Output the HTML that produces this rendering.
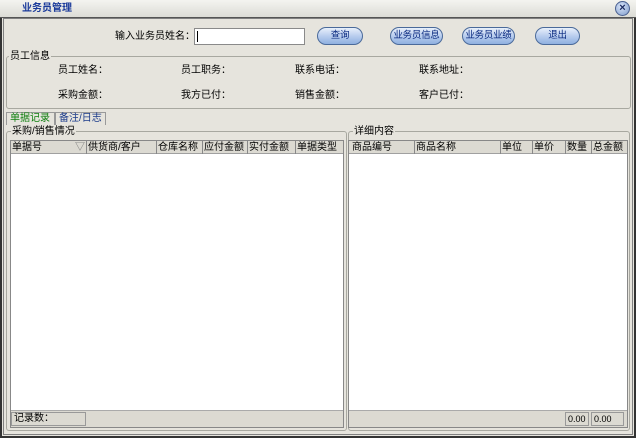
<!DOCTYPE html>
<html><head><meta charset="utf-8"><style>
*{margin:0;padding:0;box-sizing:border-box}
body{width:636px;height:438px;background:#fff;font-family:"Liberation Sans","Noto Sans CJK SC",sans-serif;font-size:10px;color:#000;position:relative;overflow:hidden}
.a{position:absolute}
.t{position:absolute;white-space:nowrap;font-size:10px;line-height:12px}
.btn{position:absolute;height:18px;border:1px solid #4a6a9a;border-radius:9px;background:linear-gradient(#e8f0fb,#b9cdee 50%,#8fb0e0);text-align:center;font-size:9.5px;line-height:16px;color:#0a2a80;white-space:nowrap;letter-spacing:-0.3px}
.hdr{position:absolute;height:13px;background:#dcdad2;border-bottom:1px solid #a0a0a0}
.hdr span{position:absolute;top:0;line-height:13px;font-size:10px;white-space:nowrap;border-left:1px solid #888;padding-left:1px}
.grp{position:absolute;border:1px solid #a8a8a0;border-radius:3px}
.lg{position:absolute;background:#e6e4dd;font-size:10px;line-height:12px;padding:0 1px;white-space:nowrap}
</style></head><body>
<div class="a" style="left:0;top:0;width:636px;height:18px;background:linear-gradient(#f4f4f0,#dcdcd6);border-bottom:1px solid #555"></div>
<div class="t" style="left:22px;top:3px;color:#1a3a9a;font-weight:bold">业务员管理</div>
<div class="a" style="left:615px;top:1px;width:15px;height:15px;border-radius:50%;background:radial-gradient(circle at 40% 35%,#d8e4f8,#7f9ccc);border:1px solid #4a6090;color:#1a2a60;font-size:11px;line-height:13px;text-align:center;font-weight:bold">×</div>
<div class="a" style="left:0;top:18px;width:636px;height:420px;background:#e6e4dd;border:2px solid #333;border-top:none"></div>
<div class="a" style="left:3px;top:18px;width:630px;height:417px;border:1px solid #808080"></div>
<div class="t" style="left:115px;top:31px">输入业务员姓名：</div>
<div class="a" style="left:194px;top:28px;width:111px;height:17px;background:#fff;border:1px solid #8a8a8a"></div>
<div class="a" style="left:197px;top:31px;width:1px;height:11px;background:#000"></div>
<div class="btn" style="left:317px;top:27px;width:46px">查询</div>
<div class="btn" style="left:390px;top:27px;width:53px">业务员信息</div>
<div class="btn" style="left:462px;top:27px;width:53px">业务员业绩</div>
<div class="btn" style="left:535px;top:27px;width:45px">退出</div>
<div class="grp" style="left:6px;top:56px;width:625px;height:53px"></div>
<div class="lg" style="left:9px;top:51px">员工信息</div>
<div class="t" style="left:58px;top:65px">员工姓名：</div>
<div class="t" style="left:181px;top:65px">员工职务：</div>
<div class="t" style="left:295px;top:65px">联系电话：</div>
<div class="t" style="left:419px;top:65px">联系地址：</div>
<div class="t" style="left:58px;top:90px">采购金额：</div>
<div class="t" style="left:181px;top:90px">我方已付：</div>
<div class="t" style="left:295px;top:90px">销售金额：</div>
<div class="t" style="left:419px;top:90px">客户已付：</div>
<div class="a" style="left:6px;top:112px;width:49px;height:13px;border:1px solid #999;border-bottom:none;background:#e6e4dd"></div>
<div class="t" style="left:10px;top:113px;color:#108010">单据记录</div>
<div class="a" style="left:55px;top:112px;width:51px;height:13px;border:1px solid #999;border-bottom:none"></div>
<div class="t" style="left:59px;top:113px;color:#1a3a8a">备注/日志</div>
<div class="grp" style="left:6px;top:131px;width:341px;height:300px"></div>
<div class="lg" style="left:11px;top:126px">采购/销售情况</div>
<div class="a" style="left:10px;top:140px;width:334px;height:288px;background:#fff;border:1px solid #888"></div>
<div class="hdr" style="left:11px;top:141px;width:332px">
<span style="left:0;border:none">单据号</span><span style="left:63px;border:none;color:#777">▽</span><span style="left:75px">供货商/客户</span><span style="left:145px">仓库名称</span><span style="left:191px">应付金额</span><span style="left:236px">实付金额</span><span style="left:284px">单据类型</span></div>
<div class="a" style="left:11px;top:410px;width:332px;height:17px;background:#dcdad2;border-top:1px solid #aaa"></div>
<div class="a" style="left:11px;top:412px;width:75px;height:14px;border:1px solid #999"></div>
<div class="t" style="left:14px;top:413px">记录数：</div>
<div class="grp" style="left:348px;top:131px;width:282px;height:300px"></div>
<div class="lg" style="left:353px;top:126px">详细内容</div>
<div class="a" style="left:348px;top:140px;width:280px;height:288px;background:#fff;border:1px solid #888"></div>
<div class="hdr" style="left:349px;top:141px;width:278px">
<span style="left:2px;border:none">商品编号</span><span style="left:65px">商品名称</span><span style="left:151px">单位</span><span style="left:183px">单价</span><span style="left:216px">数量</span><span style="left:242px">总金额</span></div>
<div class="a" style="left:349px;top:410px;width:278px;height:17px;background:#dcdad2;border-top:1px solid #aaa"></div>
<div class="a" style="left:565px;top:412px;width:24px;height:14px;border:1px solid #999;font-size:9px;line-height:12px;padding-left:2px">0.00</div>
<div class="a" style="left:591px;top:412px;width:33px;height:14px;border:1px solid #999;font-size:9px;line-height:12px;padding-left:2px">0.00</div>
</body></html>
